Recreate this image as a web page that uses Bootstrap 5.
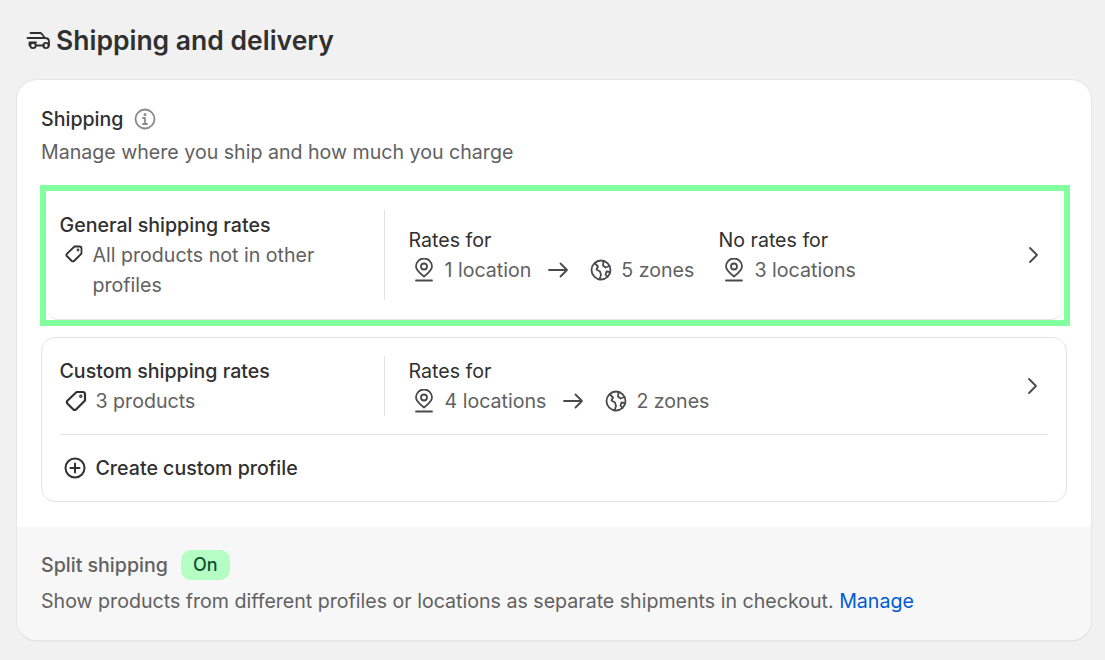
<!DOCTYPE html>
<html lang="en">
<head>
    <meta charset="UTF-8">
    <title>Shipping and delivery</title>
    <link href="https://cdn.jsdelivr.net/npm/bootstrap@5.3.3/dist/css/bootstrap.min.css" rel="stylesheet">
    <style>
        body { background: #f1f1f1; font-family: Inter, "Liberation Sans", sans-serif; font-size: 19.6px; line-height: 30px; color: #303030; height: 660px; overflow: hidden; }
        .page-title { font-size: 26.5px; line-height: 36px; font-weight: 600; margin: 0; padding: 22px 0 22px 26px; gap: 3px; }
        .main-card { margin: 0 14px 0 17px; background: #fff; border-radius: 20px; overflow: hidden; box-shadow: 0 0 0 1px #e6e6e6, 0 1px 1px rgba(0,0,0,.25); }
        .card-top { padding: 24px 24px 25px; }
        .fw-550 { font-weight: 550; }
        .muted { color: #616161; }
        .highlight { border: 6px solid #82ff9f; margin: 18px 0 0 -1px; width: 1030px; }
        .rate-box { border: 1px solid #e3e3e3; border-radius: 14px; }
        .highlight .rate-box { border-width: 0 0 1px 0; height: 129px; padding: 19px 0 0 13.5px; }
        .highlight .profile-col { width: 325.5px; }
        .custom-box { margin-top: 11px; width: 1026px; height: 165px; padding: 18px 18px 0 17.5px; }
        .custom-box .profile-col { width: 325.5px; height: 60px; }
        .profile-col { flex: none; border-right: 1px solid #e3e3e3; height: 90px; }
        .rates-col { padding-left: 23.5px; }
        .rate-group { width: 310px; }
        .rate-group:last-child { width: auto; }
        .icon-line { display: flex; align-items: center; }
        .ic { flex: none; fill: none; stroke: #303030; stroke-width: 1.8; stroke-linecap: round; stroke-linejoin: round; }
        .pin { margin: 0 10px 0 4px; stroke: #4a4a4a; }
        .arrow { margin: 0 21px 0 16px; stroke: #4a4a4a; }
        .globe { margin-right: 9px; stroke: #4a4a4a; }
        .info { margin-left: 10px; stroke: #8a8a8a; }
        .chevron { margin: 35px 23px 0 auto; stroke: #4a4a4a; }
        .custom-box .chevron { margin: 20px 8px 0 auto; }
        .divider { border-top: 1px solid #e3e3e3; margin-top: 18px; }
        .create { height: 66px; font-weight: 550; gap: 9px; padding-left: 3px; }
        .card-foot { background: #f7f7f7; height: 113px; padding: 23px 24px 0; color: #616161; }
        .pill { background: #b4fec4; color: #0c5132; border-radius: 10px; height: 30px; line-height: 30px; font-size: 18px; font-weight: 500; padding: 0 12px; margin-left: 13px; }
        .foot-text { margin-top: 6px; }
        .foot-text a { color: #005bd3; text-decoration: none; }
    </style>
</head>
<body>
<h1 class="page-title d-flex align-items-center">
    <svg class="ic" width="27" height="20" viewBox="0 0 27 20"><path d="M4.500 3H14c.8 0 1.400.3 1.900 1L19 8H1.500M19 8c2.500 0 4 1.200 4 3.500v4h-.5M10 15.500h8M3.500 15.500V12.500H10"/><circle cx="7" cy="15.500" r="2.700"/><circle cx="20" cy="15.500" r="2.700"/></svg>
    Shipping and delivery
</h1>

<div class="main-card">
    <div class="card-top">
        <div class="d-flex align-items-center fw-550">Shipping
            <svg class="ic info" width="24" height="24" viewBox="0 0 24 24"><circle cx="12" cy="12" r="9.500"/><path d="M12 11v6M10 11h2M10 17h4"/><circle cx="12" cy="7.500" r=".6"/></svg>
        </div>
        <div class="muted" style="margin-top:3px">Manage where you ship and how much you charge</div>

        <div class="highlight">
            <div class="rate-box d-flex align-items-start">
                <div class="profile-col">
                    <div class="fw-550">General shipping rates</div>
                    <div class="d-flex muted">
                        <svg class="ic" width="20" height="20" viewBox="0 0 20 20" style="margin:4px 9px 0 4px"><path d="M10.500 2.500h5c1.100 0 2 .9 2 2v5L10 17c-.6.6-1.600.6-2.200 0l-5-5c-.6-.6-.6-1.600 0-2.200z"/><circle cx="14" cy="6" r=".5"/></svg>
                        <div style="width:240px">All products not in other profiles</div>
                    </div>
                </div>
                <div class="rates-col d-flex" style="padding-top:15px">
                    <div class="rate-group">
                        <div>Rates for</div>
                        <div class="icon-line muted">
                            <svg class="ic pin" width="22" height="24" viewBox="0 0 22 24"><path d="M11 18.500c-4.500-3.500-8-6.500-8-10a8 8 0 0 1 16 0c0 3.500-3.500 6.500-8 10z"/><circle cx="11" cy="8.500" r="3"/><path d="M3 22.500h16"/></svg>
                            1 location
                            <svg class="ic arrow" width="22" height="18" viewBox="0 0 22 18"><path d="M2 9h18M13.500 2.500 20 9l-6.500 6.500"/></svg>
                            <svg class="ic globe" width="22" height="22" viewBox="0 0 22 22"><circle cx="11" cy="11" r="9.500"/><path d="M5 4.500l3 3-1.500 3 3.500 2 1 3.500-1.500 4.500M19.500 7l-4 1.500-2.500-2 .5-4.500M20 13l-3.500-.5-1 3 2 2.500"/></svg>
                            5 zones
                        </div>
                    </div>
                    <div class="rate-group">
                        <div>No rates for</div>
                        <div class="icon-line muted">
                            <svg class="ic pin" width="22" height="24" viewBox="0 0 22 24"><path d="M11 18.500c-4.500-3.500-8-6.500-8-10a8 8 0 0 1 16 0c0 3.500-3.500 6.500-8 10z"/><circle cx="11" cy="8.500" r="3"/><path d="M3 22.500h16"/></svg>
                            3 locations
                        </div>
                    </div>
                </div>
                <svg class="ic chevron" width="16" height="20" viewBox="0 0 16 20"><path d="M5 3l7 7-7 7"/></svg>
            </div>
        </div>

        <div class="rate-box custom-box">
            <div class="d-flex align-items-start">
                <div class="profile-col">
                    <div class="fw-550">Custom shipping rates</div>
                    <div class="icon-line muted">
                        <svg class="ic" width="24" height="24" viewBox="0 0 20 20" style="margin:0 8px 0 4px"><path d="M10.500 2.500h5c1.100 0 2 .9 2 2v5L10 17c-.6.6-1.600.6-2.200 0l-5-5c-.6-.6-.6-1.600 0-2.200z"/><circle cx="14" cy="6" r=".5"/></svg>
                        3 products
                    </div>
                </div>
                <div class="rates-col">
                    <div class="rate-group">
                        <div>Rates for</div>
                        <div class="icon-line muted">
                            <svg class="ic pin" width="22" height="24" viewBox="0 0 22 24"><path d="M11 18.500c-4.500-3.500-8-6.500-8-10a8 8 0 0 1 16 0c0 3.500-3.500 6.500-8 10z"/><circle cx="11" cy="8.500" r="3"/><path d="M3 22.500h16"/></svg>
                            4 locations
                            <svg class="ic arrow" width="22" height="18" viewBox="0 0 22 18"><path d="M2 9h18M13.500 2.500 20 9l-6.500 6.500"/></svg>
                            <svg class="ic globe" width="22" height="22" viewBox="0 0 22 22"><circle cx="11" cy="11" r="9.500"/><path d="M5 4.500l3 3-1.500 3 3.500 2 1 3.500-1.500 4.500M19.500 7l-4 1.500-2.500-2 .5-4.500M20 13l-3.500-.5-1 3 2 2.500"/></svg>
                            2 zones
                        </div>
                    </div>
                </div>
                <svg class="ic chevron" width="16" height="20" viewBox="0 0 16 20"><path d="M5 3l7 7-7 7"/></svg>
            </div>
            <div class="divider"></div>
            <div class="create d-flex align-items-center">
                <svg class="ic" width="24" height="24" viewBox="0 0 24 24" style="stroke-width:2"><circle cx="12" cy="12" r="9.500"/><path d="M12 7.500v9M7.500 12h9"/></svg>
                Create custom profile
            </div>
        </div>
    </div>

    <div class="card-foot">
        <div class="d-flex align-items-center"><span class="fw-550">Split shipping</span><span class="pill">On</span></div>
        <div class="foot-text">Show products from different profiles or locations as separate shipments in checkout. <a href="#">Manage</a></div>
    </div>
</div>
<script src="https://cdn.jsdelivr.net/npm/bootstrap@5.3.3/dist/js/bootstrap.bundle.min.js"></script>
</body>
</html>
